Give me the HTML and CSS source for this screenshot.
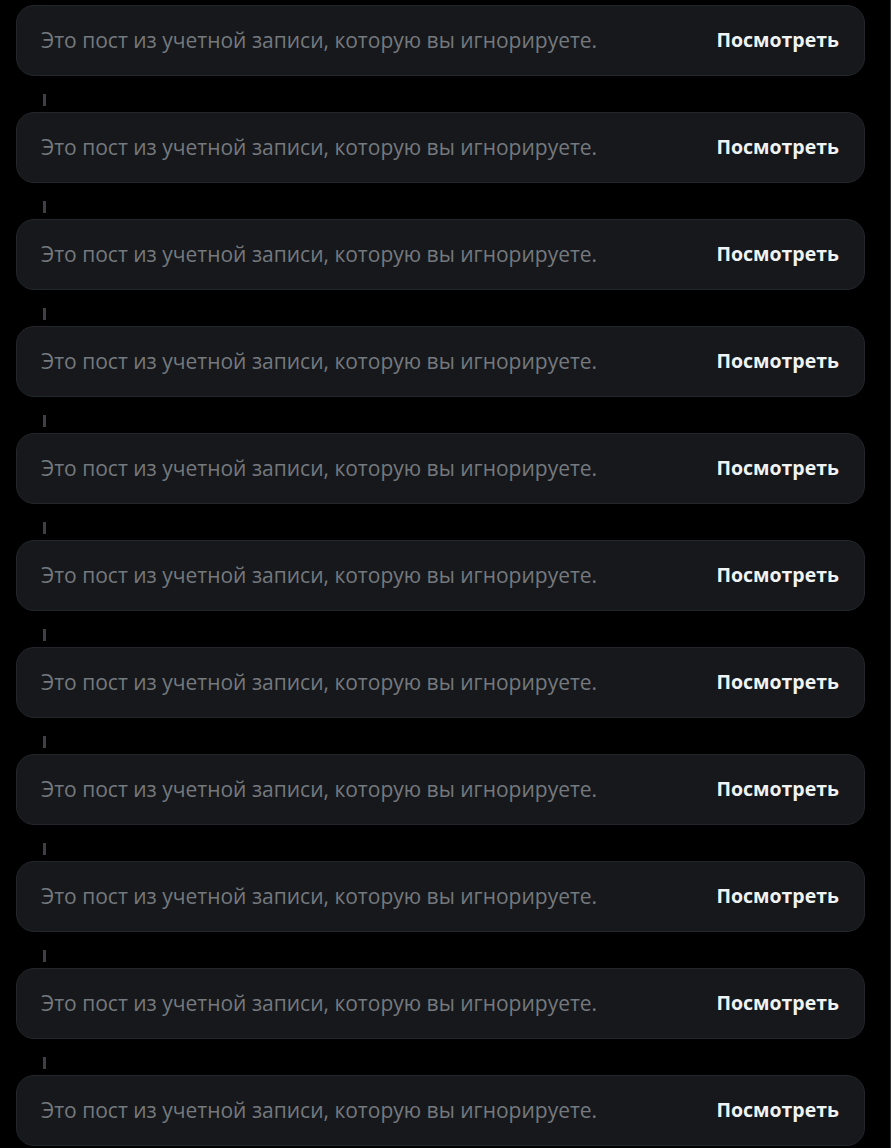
FILE: index.html
```html
<!DOCTYPE html>
<html lang="ru">
<head>
<meta charset="utf-8">
<link rel="stylesheet" href="styles.css">
</head>
<body>
<div class="timeline">
  <div class="card"><span class="msg">Это пост из учетной записи, которую вы игнорируете.</span><button class="view">Посмотреть</button></div>
  <div class="connector"><span class="line"></span></div>
  <div class="card"><span class="msg">Это пост из учетной записи, которую вы игнорируете.</span><button class="view">Посмотреть</button></div>
  <div class="connector"><span class="line"></span></div>
  <div class="card"><span class="msg">Это пост из учетной записи, которую вы игнорируете.</span><button class="view">Посмотреть</button></div>
  <div class="connector"><span class="line"></span></div>
  <div class="card"><span class="msg">Это пост из учетной записи, которую вы игнорируете.</span><button class="view">Посмотреть</button></div>
  <div class="connector"><span class="line"></span></div>
  <div class="card"><span class="msg">Это пост из учетной записи, которую вы игнорируете.</span><button class="view">Посмотреть</button></div>
  <div class="connector"><span class="line"></span></div>
  <div class="card"><span class="msg">Это пост из учетной записи, которую вы игнорируете.</span><button class="view">Посмотреть</button></div>
  <div class="connector"><span class="line"></span></div>
  <div class="card"><span class="msg">Это пост из учетной записи, которую вы игнорируете.</span><button class="view">Посмотреть</button></div>
  <div class="connector"><span class="line"></span></div>
  <div class="card"><span class="msg">Это пост из учетной записи, которую вы игнорируете.</span><button class="view">Посмотреть</button></div>
  <div class="connector"><span class="line"></span></div>
  <div class="card"><span class="msg">Это пост из учетной записи, которую вы игнорируете.</span><button class="view">Посмотреть</button></div>
  <div class="connector"><span class="line"></span></div>
  <div class="card"><span class="msg">Это пост из учетной записи, которую вы игнорируете.</span><button class="view">Посмотреть</button></div>
  <div class="connector"><span class="line"></span></div>
  <div class="card"><span class="msg">Это пост из учетной записи, которую вы игнорируете.</span><button class="view">Посмотреть</button></div>
</div>
</body>
</html>
```

FILE: styles.css
```css
html, body {
  margin: 0;
  padding: 0;
  background: #000;
}
body {
  font-family: "Open Sans", "Noto Sans", "Liberation Sans", sans-serif;
}
.timeline {
  box-sizing: border-box;
  min-height: 100vh;
  width: 891px;
  padding: 5px 25px 0 16px;
  border-right: 1px solid #2f3336;
  display: flex;
  flex-direction: column;
}
.card {
  box-sizing: border-box;
  height: 71px;
  display: flex;
  align-items: center;
  justify-content: space-between;
  padding: 0 25px 2px 24px;
  background: #16181c;
  border: 1px solid #23262a;
  border-radius: 18px;
}
.msg {
  color: #75797e;
  font-size: 21px;
  letter-spacing: 0;
}
.view {
  background: none;
  border: 0;
  padding: 0;
  color: #eff3f4;
  font-family: inherit;
  font-size: 19.5px;
  font-weight: 700;
  letter-spacing: 0;
  cursor: pointer;
}
.connector {
  height: 36px;
  padding: 18px 0 0 27px;
  box-sizing: border-box;
}
.line {
  display: block;
  width: 3px;
  height: 12px;
  background: #3e4144;
}
```
